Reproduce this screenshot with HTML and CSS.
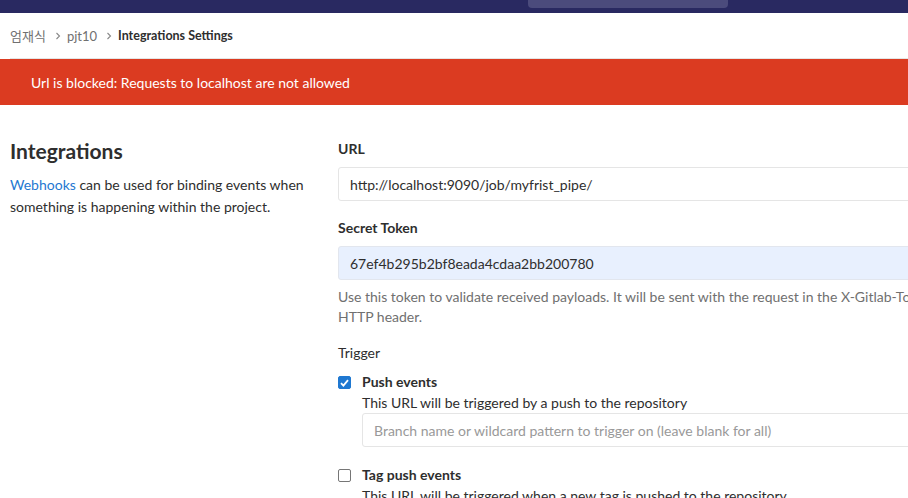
FILE: index.html
```html
<!DOCTYPE html>
<html lang="ko">
<head>
<meta charset="utf-8">
<title>Integrations Settings</title>
<link rel="stylesheet" href="styles.css">
</head>
<body>
<header class="navbar">
  <div class="search-box"></div>
</header>
<nav class="breadcrumbs">
  <div class="crumbs">
    <a class="crumb" href="#">엄재식</a>
    <span class="sep"><svg width="6" height="8" viewBox="0 0 6 8"><path d="M1.5 1 L4.5 4 L1.5 7" fill="none" stroke="#888" stroke-width="1.1"/></svg></span>
    <a class="crumb" href="#">pjt10</a>
    <span class="sep"><svg width="6" height="8" viewBox="0 0 6 8"><path d="M1.5 1 L4.5 4 L1.5 7" fill="none" stroke="#888" stroke-width="1.1"/></svg></span>
    <span class="crumb current">Integrations Settings</span>
  </div>
</nav>
<div class="alert">Url is blocked: Requests to localhost are not allowed</div>
<main class="content">
  <section class="intro">
    <h4 class="title">Integrations</h4>
    <p class="lead"><a href="#" class="link">Webhooks</a> can be used for binding events when something is happening within the project.</p>
  </section>
  <section class="form">
    <div class="field">
      <label class="label">URL</label>
      <div class="input">http://localhost:9090/job/myfrist_pipe/</div>
    </div>
    <div class="field">
      <label class="label">Secret Token</label>
      <div class="input autofill">67ef4b295b2bf8eada4cdaa2bb200780</div>
      <p class="help">Use this token to validate received payloads. It will be sent with the request in the X-Gitlab-Token HTTP header.</p>
    </div>
    <div class="field">
      <div class="label plain">Trigger</div>
      <div class="check-row">
        <span class="checkbox checked"><svg width="9" height="8" viewBox="0 0 9 8"><path d="M1 4.2 L3.4 6.6 L8 1.2" fill="none" stroke="#fff" stroke-width="1.8"/></svg></span>
        <div class="check-body">
          <div class="check-title">Push events</div>
          <div class="check-desc">This URL will be triggered by a push to the repository</div>
          <div class="input small placeholder">Branch name or wildcard pattern to trigger on (leave blank for all)</div>
        </div>
      </div>
      <div class="check-row">
        <span class="checkbox"></span>
        <div class="check-body">
          <div class="check-title">Tag push events</div>
          <div class="check-desc">This URL will be triggered when a new tag is pushed to the repository</div>
        </div>
      </div>
    </div>
  </section>
</main>
</body>
</html>
```
FILE: styles.css
```css
html, body {
  margin: 0;
  padding: 0;
  overflow: hidden;
  background: #fff;
}
body {
  font-family: "Lato", "Noto Sans CJK KR", sans-serif;
  font-size: 14px;
  color: #2e2e2e;
  width: 908px;
  height: 498px;
}
a { text-decoration: none; }

.navbar {
  height: 13px;
  background: #292961;
  display: flex;
  padding-left: 528px;
}
.search-box {
  width: 200px;
  height: 8px;
  background: #4b4b7c;
  border-radius: 0 0 4px 4px;
}

.breadcrumbs {
  padding-left: 10px;
}
.crumbs {
  height: 45px;
  display: flex;
  align-items: center;
  border-bottom: 1px solid #e5e5e5;
  font-size: 13px;
}
.crumb { color: #707070; }
.crumb.current { color: #2e2e2e; font-weight: 700; font-size: 12.5px; }
.sep {
  display: inline-flex;
  align-items: center;
  margin: 0 6px 0 9px;
}

.alert {
  height: 46px;
  background: #db3b21;
  color: #fff;
  display: flex;
  align-items: center;
  padding-left: 31px;
}

.content {
  display: flex;
  padding-left: 10px;
  padding-top: 32px;
  width: 1000px;
}
.intro {
  width: 313px;
  margin-right: 15px;
  flex: none;
}
.title {
  margin: 0;
  font-size: 21px;
  font-weight: 700;
  line-height: 28px;
}
.lead {
  margin: 9px 0 0;
  line-height: 22px;
}
.link { color: #1f78d1; }

.form {
  flex: none;
  width: 610px;
}
.field { margin-bottom: 15px; }
.label {
  display: block;
  font-weight: 700;
  line-height: 20px;
  margin: 0 0 8px;
  padding-top: 2px;
}
.label.plain { font-weight: 400; margin-bottom: 9px; }
.input {
  height: 34px;
  box-sizing: border-box;
  border: 1px solid #e5e5e5;
  border-radius: 3px 0 0 3px;
  padding: 0 11px;
  display: flex;
  align-items: center;
  width: 640px;
  color: #2e2e2e;
  white-space: nowrap;
}
.input.autofill {
  background: #e8f0fe;
  border-color: #e2e6ee;
}
.help {
  color: #707070;
  margin: 7px 0 0;
  line-height: 20px;
}
.field:nth-child(2) { margin-bottom: 14px; }
.check-row {
  display: flex;
  margin-bottom: 18px;
}
.checkbox {
  width: 13px;
  height: 13px;
  box-sizing: border-box;
  border: 1px solid #767676;
  border-radius: 2px;
  margin-top: 4px;
  margin-right: 11px;
  display: flex;
  align-items: center;
  justify-content: center;
  flex: none;
}
.checkbox.checked {
  background: #1f78d1;
  border-color: #1f78d1;
}
.check-title { font-weight: 700; line-height: 20px; }
.check-desc { line-height: 21px; }
.input.small { width: 620px; }
.placeholder { color: #999; }
```
